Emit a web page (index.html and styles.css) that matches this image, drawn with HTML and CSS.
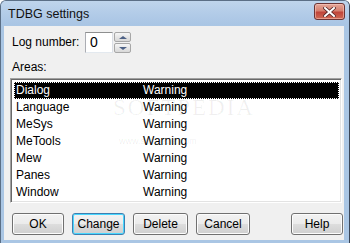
FILE: index.html
```html
<!DOCTYPE html>
<html lang="en">
<head>
  <meta charset="UTF-8">
  <title>TDBG settings</title>
  <link rel="stylesheet" href="styles.css">
</head>
<body>
  <div class="window">
    <div class="titlebar">
      <span class="title">TDBG settings</span>
      <span class="close">
        <svg width="13" height="10" viewBox="0 0 13 10">
          <path d="M2 1 L11 9 M11 1 L2 9" stroke="#5a2a2a" stroke-width="3.6" stroke-linecap="square"/>
          <path d="M2 1 L11 9 M11 1 L2 9" stroke="#ffffff" stroke-width="2" stroke-linecap="square"/>
        </svg>
      </span>
    </div>

    <div class="client">
      <div class="log-row">
        <span class="label">Log number:</span>
        <div class="spin">
          <span class="spin-input">0</span>
          <span class="spin-btns">
            <span class="spin-btn"><i class="arrow up"></i></span>
            <span class="spin-btn"><i class="arrow down"></i></span>
          </span>
        </div>
      </div>

      <div class="label areas">Areas:</div>

      <div class="listbox">
        <div class="item selected"><span class="name">Dialog</span><span>Warning</span></div>
        <div class="item"><span class="name">Language</span><span>Warning</span></div>
        <div class="item"><span class="name">MeSys</span><span>Warning</span></div>
        <div class="item"><span class="name">MeTools</span><span>Warning</span></div>
        <div class="item"><span class="name">Mew</span><span>Warning</span></div>
        <div class="item"><span class="name">Panes</span><span>Warning</span></div>
        <div class="item"><span class="name">Window</span><span>Warning</span></div>
        <div class="watermark">SOFTPEDIA<sup>™</sup></div>
        <div class="watermark-url">www.softpedia.com</div>
      </div>

      <div class="buttons">
        <button class="btn ok">OK</button>
        <button class="btn change default">Change</button>
        <button class="btn delete">Delete</button>
        <button class="btn cancel">Cancel</button>
        <button class="btn help">Help</button>
      </div>
    </div>
  </div>
</body>
</html>
```

FILE: styles.css
```css
body {
  margin: 0;
  font-family: 'Liberation Sans', Arial, sans-serif;
  font-size: 12px;
  color: #000;
  background: #fff;
}
.window {
  width: 350px;
  height: 243px;
  box-sizing: border-box;
  display: flex;
  flex-direction: column;
  background: #aac6e4;
  border: 1px solid #5b6f86;
  border-right-color: #3a4556;
  border-bottom: none;
  border-radius: 6px 6px 0 0;
  overflow: hidden;
}
.titlebar {
  height: 24px;
  display: flex;
  align-items: center;
  justify-content: space-between;
  padding: 0 4px 0 7px;
  background: linear-gradient(to bottom, #bfd5ec 0%, #b3cce8 50%, #a9c5e4 100%);
}
.title {
  font-size: 12.5px;
  color: #111;
  margin-top: 1px;
}
.close {
  width: 29px;
  height: 15px;
  margin-top: -3px;
  display: flex;
  align-items: center;
  justify-content: center;
  border: 1px solid #6b3434;
  border-radius: 3px;
  background: linear-gradient(to bottom, #e4a79a 0%, #d6806f 45%, #c0453a 55%, #cf6a55 100%);
  box-shadow: inset 0 0 0 1px rgba(255, 210, 200, 0.5);
}
.client {
  flex: 1;
  margin: 1px 5px 3px 3px;
  background: #f0f0f0;
  padding: 6px 0 0 6px;
  display: flex;
  flex-direction: column;
}
.label {
  padding-left: 2px;
}
.log-row {
  display: flex;
  align-items: center;
}
.log-row .label {
  width: 73px;
  margin-top: -2px;
}
.spin {
  display: flex;
  height: 21px;
}
.spin-input {
  width: 22px;
  height: 19px;
  padding-left: 4px;
  line-height: 19px;
  font-size: 14px;
  background: #fff;
  border: 1px solid #abadb3;
  border-top-color: #8e8f8f;
  border-right-color: #dbdfe6;
  border-bottom-color: #e3e9ef;
}
.spin-btns {
  display: flex;
  flex-direction: column;
  width: 17px;
  margin-left: 1px;
  gap: 1px;
}
.spin-btn {
  flex: 1;
  display: flex;
  align-items: center;
  justify-content: center;
  border: 1px solid #a7a7a7;
  border-radius: 2px;
  background: linear-gradient(to bottom, #f6f6f6 0%, #e6e6e6 50%, #d8d8d8 100%);
}
.arrow {
  width: 0;
  height: 0;
  border-left: 4px solid transparent;
  border-right: 4px solid transparent;
}
.arrow.up {
  border-bottom: 3px solid #4d6185;
}
.arrow.down {
  border-top: 3px solid #4d6185;
}
.areas {
  margin-top: 7px;
  height: 15px;
}
.listbox {
  position: relative;
  width: 332px;
  height: 125px;
  box-sizing: border-box;
  margin-top: 3px;
  padding: 3px 2px 0 3px;
  background: #fff;
  border: 1px solid #a0a0a0;
  border-right-color: #fff;
  border-bottom-color: #fff;
  box-shadow: inset 1px 1px 0 #696969, inset -1px -1px 0 #e3e3e3;
  overflow: hidden;
}
.item {
  position: relative;
  z-index: 1;
  display: flex;
  height: 17px;
  line-height: 15px;
  box-sizing: border-box;
  padding: 0 0 0 1px;
  font-size: 12px;
  border: 1px solid transparent;
}
.item .name {
  width: 127px;
}
.item.selected {
  background: #000;
  color: #fff;
  border: 1px dotted #fff;
}
.watermark {
  position: absolute;
  left: 102px;
  top: 16px;
  font-family: 'Liberation Serif', serif;
  font-size: 23px;
  letter-spacing: 2px;
  color: rgba(0, 0, 0, 0.06);
}
.watermark sup {
  font-size: 7px;
  vertical-align: top;
}
.watermark-url {
  position: absolute;
  left: 108px;
  top: 57px;
  font-size: 9px;
  color: rgba(0, 0, 0, 0.08);
}
.buttons {
  display: flex;
  margin-top: 10px;
  padding-left: 2px;
  padding-right: 1px;
  gap: 8px;
}
.btn {
  height: 22px;
  padding: 0;
  font-family: 'Liberation Sans', Arial, sans-serif;
  font-size: 12px;
  color: #000;
  border: 1px solid #707070;
  border-radius: 3px;
  background: linear-gradient(to bottom, #f2f2f2 0%, #ebebeb 50%, #dddddd 51%, #cfcfcf 100%);
  box-shadow: inset 0 0 0 1px #fcfcfc;
}
.btn.default {
  border-color: #3c7fb1;
  box-shadow: inset 0 0 0 1px #48d7ff;
}
.ok { width: 52px; }
.change { width: 53px; }
.delete { width: 55px; }
.cancel { width: 54px; }
.help {
  width: 52px;
  margin-left: auto;
}
```
